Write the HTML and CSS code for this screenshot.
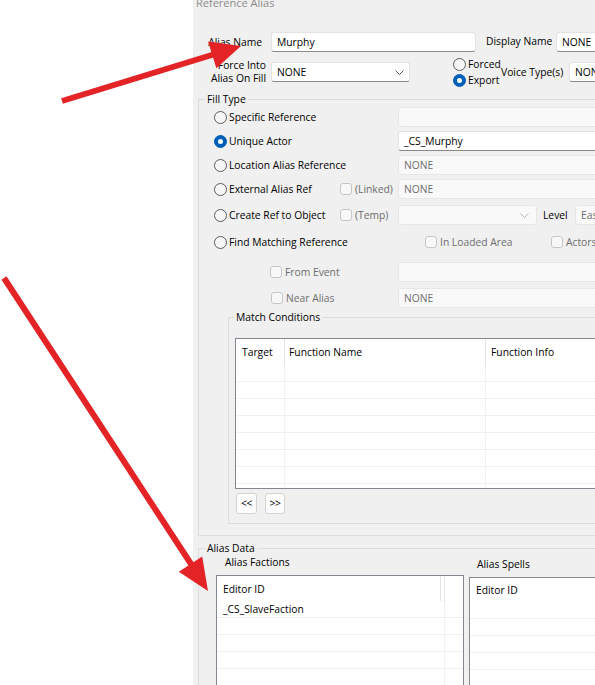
FILE: index.html
```html
<!DOCTYPE html>
<html lang="en">
<head>
    <meta charset="UTF-8">
    <title>Reference Alias</title>
    <link rel="stylesheet" href="styles.css">
</head>
<body>
<div class="page">
    <div class="gutter"></div>
    <div class="dialog">
        <div class="sheet">
            <div class="title">Reference Alias</div>

            <div class="row row-name">
                <span class="lbl-name">Alias Name</span>
                <div class="field field-name">Murphy</div>
                <span class="lbl-display">Display Name</span>
                <div class="field field-display">NONE</div>
            </div>

            <div class="row row-force">
                <span class="lbl-force">Force Into<br>Alias On Fill</span>
                <div class="field combo combo-force">
                    <span>NONE</span>
                    <svg class="chev" width="9" height="5" viewBox="0 0 9 5"><polyline points="0.5,0.5 4.5,4.5 8.5,0.5"/></svg>
                </div>
                <div class="radio-stack">
                    <label class="opt"><span class="radio"></span>Forced</label>
                    <label class="opt"><span class="radio on"></span>Export</label>
                </div>
                <span class="lbl-voice">Voice Type(s)</span>
                <div class="field field-voice">NONE</div>
            </div>

            <fieldset class="group group-fill">
                <legend>Fill Type</legend>
                <div class="fill-body">
                    <div class="fill-rows">
                        <div class="fill-row">
                            <label class="opt choice"><span class="radio"></span>Specific Reference</label>
                            <span class="check-cell"></span>
                            <div class="field off"></div>
                        </div>
                        <div class="fill-row">
                            <label class="opt choice"><span class="radio on"></span>Unique Actor</label>
                            <span class="check-cell"></span>
                            <div class="field">_CS_Murphy</div>
                        </div>
                        <div class="fill-row">
                            <label class="opt choice"><span class="radio"></span>Location Alias Reference</label>
                            <span class="check-cell"></span>
                            <div class="field off">NONE</div>
                        </div>
                        <div class="fill-row">
                            <label class="opt choice"><span class="radio"></span>External Alias Ref</label>
                            <span class="check-cell"><span class="check"></span>(Linked)</span>
                            <div class="field off">NONE</div>
                        </div>
                        <div class="fill-row">
                            <label class="opt choice"><span class="radio"></span>Create Ref to Object</label>
                            <span class="check-cell"><span class="check"></span>(Temp)</span>
                            <div class="field off combo combo-level">
                                <span></span>
                                <svg class="chev" width="9" height="5" viewBox="0 0 9 5"><polyline points="0.5,0.5 4.5,4.5 8.5,0.5"/></svg>
                            </div>
                            <span class="lbl-level">Level</span>
                            <div class="field off field-level">Easy</div>
                        </div>
                        <div class="fill-row">
                            <label class="opt choice choice-long"><span class="radio"></span>Find Matching Reference</label>
                            <span class="check-cell check-wide"><span class="check"></span>In Loaded Area</span>
                            <span class="check-cell check-wide"><span class="check"></span>Actors Only</span>
                        </div>
                        <div class="fill-row">
                            <span class="check-cell check-event"><span class="check"></span>From Event</span>
                            <div class="field off"></div>
                        </div>
                        <div class="fill-row">
                            <span class="check-cell check-near"><span class="check"></span>Near Alias</span>
                            <div class="field off">NONE</div>
                        </div>
                    </div>

                    <fieldset class="group group-match">
                        <legend>Match Conditions</legend>
                        <div class="match-body">
                            <div class="list list-match">
                                <div class="lhead">
                                    <div class="hc c-target">Target</div>
                                    <div class="hc c-fname">Function Name</div>
                                    <div class="hc c-finfo">Function Info</div>
                                </div>
                                <div class="lrow"><div class="c-target"></div><div class="c-fname"></div><div></div></div>
                                <div class="lrow"><div class="c-target"></div><div class="c-fname"></div><div></div></div>
                                <div class="lrow"><div class="c-target"></div><div class="c-fname"></div><div></div></div>
                                <div class="lrow"><div class="c-target"></div><div class="c-fname"></div><div></div></div>
                                <div class="lrow"><div class="c-target"></div><div class="c-fname"></div><div></div></div>
                                <div class="lrow"><div class="c-target"></div><div class="c-fname"></div><div></div></div>
                                <div class="lrow"><div class="c-target"></div><div class="c-fname"></div><div></div></div>
                                <div class="lrow"><div class="c-target"></div><div class="c-fname"></div><div></div></div>
                            </div>
                            <div class="pager">
                                <button class="pg">&lt;&lt;</button>
                                <button class="pg pg-next">&gt;&gt;</button>
                            </div>
                        </div>
                    </fieldset>
                </div>
            </fieldset>

            <fieldset class="group group-alias">
                <legend>Alias Data</legend>
                <div class="alias-body">
                    <div class="alias-col">
                        <div class="col-title">Alias Factions</div>
                        <div class="list list-factions">
                            <div class="lhead">
                                <div class="hc c-edid">Editor ID</div>
                                <div class="hc c-gap"></div>
                                <div class="hc"></div>
                            </div>
                            <div class="lrow"><div class="c-edrow">_CS_SlaveFaction</div><div></div></div>
                            <div class="lrow"><div class="c-edrow"></div><div></div></div>
                            <div class="lrow"><div class="c-edrow"></div><div></div></div>
                            <div class="lrow"><div class="c-edrow"></div><div></div></div>
                            <div class="lrow"><div class="c-edrow"></div><div></div></div>
                        </div>
                    </div>
                    <div class="alias-col alias-col-spells">
                        <div class="col-title">Alias Spells</div>
                        <div class="list list-spells">
                            <div class="lhead">
                                <div class="hc">Editor ID</div>
                            </div>
                            <div class="lrow"><div></div></div>
                            <div class="lrow"><div></div></div>
                            <div class="lrow"><div></div></div>
                            <div class="lrow"><div></div></div>
                            <div class="lrow"><div></div></div>
                        </div>
                    </div>
                </div>
            </fieldset>
        </div>
    </div>

    <!-- red callout arrows drawn over the dialog -->
    <svg class="arrows" width="595" height="685" viewBox="0 0 595 685">
        <line x1="62" y1="101" x2="215" y2="54" />
        <polygon points="208,41.4 241,46 216.4,68.2" />
        <line x1="4" y1="278" x2="193" y2="567" />
        <polygon points="202.2,556.6 208,591 178.8,571.8" />
    </svg>
</div>
</body>
</html>
```

FILE: styles.css
```css
body {
    margin: 0;
    background-color: #fff;
    font-family: "Open Sans", "Noto Sans", sans-serif;
    font-size: 10.3px;
    color: #000;
}

.page {
    position: relative;
    display: flex;
    width: 595px;
    height: 685px;
    overflow: hidden;
}

.gutter {
    width: 193px;
    flex-shrink: 0;
}

.dialog {
    flex: 1;
    background-color: #f0f0f0;
    overflow: hidden;
}

.sheet {
    width: 520px;
}

.title {
    margin-top: -4px;
    height: 16px;
    line-height: 13px;
    padding-left: 3px;
    font-size: 11px;
    color: #8b8b8b;
}

/* top rows */
.row {
    display: flex;
    align-items: center;
}

.row > * {
    flex-shrink: 0;
}

.row-name {
    margin-top: 20px;
    height: 20px;
}

.lbl-name {
    width: 69px;
    text-align: right;
}

.field-name {
    margin-left: 9px;
    width: 205px;
}

.lbl-display {
    margin-left: 10px;
    width: 70px;
    margin-bottom: 3px;
}

.field-display,
.field-voice {
    width: 80px;
}

.row-force {
    margin-top: 5px;
    height: 30px;
}

.lbl-force {
    width: 73px;
    text-align: right;
    line-height: 12.7px;
}

.combo-force {
    margin-left: 5px;
    width: 139px;
}

.radio-stack {
    margin-left: 43px;
    width: 48px;
    display: flex;
    flex-direction: column;
    gap: 3px;
}

.lbl-voice {
    width: 68px;
}

/* inputs */
.field {
    box-sizing: border-box;
    height: 20px;
    line-height: 18px;
    padding: 0 5px;
    background-color: #fff;
    border: 1px solid #e3e3e3;
    border-bottom-color: #8a8a8a;
    border-radius: 3px;
    white-space: nowrap;
    overflow: hidden;
}

.field.off {
    background-color: #f9f9f9;
    border-color: #e6e6e6;
    color: #6d6d6d;
}

.combo {
    display: flex;
    align-items: center;
    justify-content: space-between;
}

.chev {
    fill: none;
    stroke: #606060;
    stroke-width: 1;
}

.off .chev {
    stroke: #b8b8b8;
}

/* radios and checkboxes */
.opt {
    display: flex;
    align-items: center;
    gap: 2px;
    height: 13px;
    white-space: nowrap;
}

.radio {
    box-sizing: border-box;
    width: 13px;
    height: 13px;
    flex-shrink: 0;
    border: 1px solid #5c5c5c;
    border-radius: 50%;
    background-color: #f6f6f6;
    display: flex;
    align-items: center;
    justify-content: center;
}

.radio.on {
    background-color: #005fb8;
    border-color: #005fb8;
}

.radio.on::after {
    content: "";
    width: 5px;
    height: 5px;
    border-radius: 50%;
    background-color: #fff;
}

.check {
    box-sizing: border-box;
    width: 12px;
    height: 12px;
    flex-shrink: 0;
    border: 1px solid #c6c6c6;
    border-radius: 3px;
    background-color: #f8f8f8;
}

/* group boxes */
.group {
    margin: 0;
    padding: 0;
    border: 1px solid #dcdcdc;
    min-width: 0;
    box-sizing: border-box;
}

.group legend {
    margin-left: 6px;
    padding: 0 2px;
    line-height: 14px;
}

.group-fill {
    margin: 5px 0 0 5px;
    width: 440px;
}

.fill-body {
    padding: 1px 0 11px 15px;
}

.fill-rows {
    display: grid;
    grid-template-rows: 24px 24px 24px 26px 27px 30px 26px 20px;
}

.fill-row {
    display: flex;
    align-items: center;
    height: 20px;
}

.fill-row > * {
    flex-shrink: 0;
}

.choice {
    width: 126px;
}

.choice-long {
    width: 211px;
}

.check-cell {
    width: 58px;
    display: flex;
    align-items: center;
    gap: 3px;
    color: #6d6d6d;
    white-space: nowrap;
}

.check-wide {
    width: 126px;
}

.check-event {
    margin-left: 56px;
    width: 128px;
}

.check-near {
    margin-left: 57px;
    width: 127px;
}

.fill-row .field {
    width: 260px;
}

.fill-row .combo-level {
    width: 139px;
    padding-right: 7px;
}

.lbl-level {
    margin-left: 6px;
    width: 32px;
}

.fill-row .field-level {
    width: 60px;
}

.group-match {
    margin: 2px 0 0 14px;
    width: 420px;
}

.group-match legend {
    margin-left: 5px;
}

.match-body {
    padding: 14px 0 9px 6px;
}

/* list views */
.list {
    box-sizing: border-box;
    border: 1px solid #828790;
    background-color: #fff;
    overflow: hidden;
}

.lhead {
    display: flex;
    height: 26px;
}

.hc {
    box-sizing: border-box;
    display: flex;
    align-items: center;
    padding-left: 5px;
    border-right: 1px solid #e5e5e5;
    white-space: nowrap;
}

.lrow {
    box-sizing: border-box;
    display: flex;
    height: 17px;
    line-height: 16px;
    border-bottom: 1px solid #f0f0f0;
}

.lrow > div {
    box-sizing: border-box;
    white-space: nowrap;
}

.lhead > :last-child,
.lrow > :last-child {
    flex: 1;
    border-right: none;
}

.list-match {
    width: 400px;
    height: 151px;
}

.c-target {
    width: 49px;
    flex-shrink: 0;
    border-right: 1px solid #f0f0f0;
}

.hc.c-target {
    padding-left: 6px;
    border-right-color: #e5e5e5;
}

.c-fname {
    width: 201px;
    flex-shrink: 0;
    border-right: 1px solid #f0f0f0;
}

.hc.c-fname {
    padding-left: 4px;
    border-right-color: #e5e5e5;
}

.pager {
    display: flex;
    gap: 8px;
    margin-top: 4px;
    padding-left: 1px;
}

.pg {
    box-sizing: border-box;
    width: 21px;
    height: 21px;
    padding: 0 0 1px;
    font-family: inherit;
    font-size: 10.3px;
    letter-spacing: -0.5px;
    color: #000;
    background-color: #fdfdfd;
    border: 1px solid #d3d3d3;
    border-radius: 3px;
}

.pg-next {
    width: 20px;
}

.group-alias {
    margin: 5px 0 0 5px;
    width: 440px;
    height: 170px;
}

.alias-body {
    display: flex;
    gap: 5px;
    padding-left: 17px;
}

.alias-col {
    width: 248px;
    flex-shrink: 0;
}

.col-title {
    line-height: 14px;
    padding-left: 9px;
}

.alias-col .list {
    margin-top: 6px;
    height: 130px;
}

.list-factions .lhead {
    height: 25px;
}

.list-spells .lhead {
    height: 24px;
}

.list-factions .hc,
.list-spells .hc,
.list-factions .lrow > div,
.list-spells .lrow > div {
    padding-left: 6px;
}

.c-edid {
    width: 224px;
    flex-shrink: 0;
}

.list-factions .c-gap {
    width: 4px;
    padding: 0;
    flex-shrink: 0;
}

.c-edrow {
    width: 228px;
    flex-shrink: 0;
    border-right: 1px solid #f0f0f0;
}

.alias-col-spells {
    margin-top: 2px;
    width: 200px;
}

.alias-col-spells .col-title {
    padding-left: 8px;
}

/* callout arrows */
.arrows {
    position: absolute;
    top: 0;
    left: 0;
    pointer-events: none;
}

.arrows line {
    stroke: #e32326;
    stroke-width: 6;
}

.arrows polygon {
    fill: #e32326;
}
```
